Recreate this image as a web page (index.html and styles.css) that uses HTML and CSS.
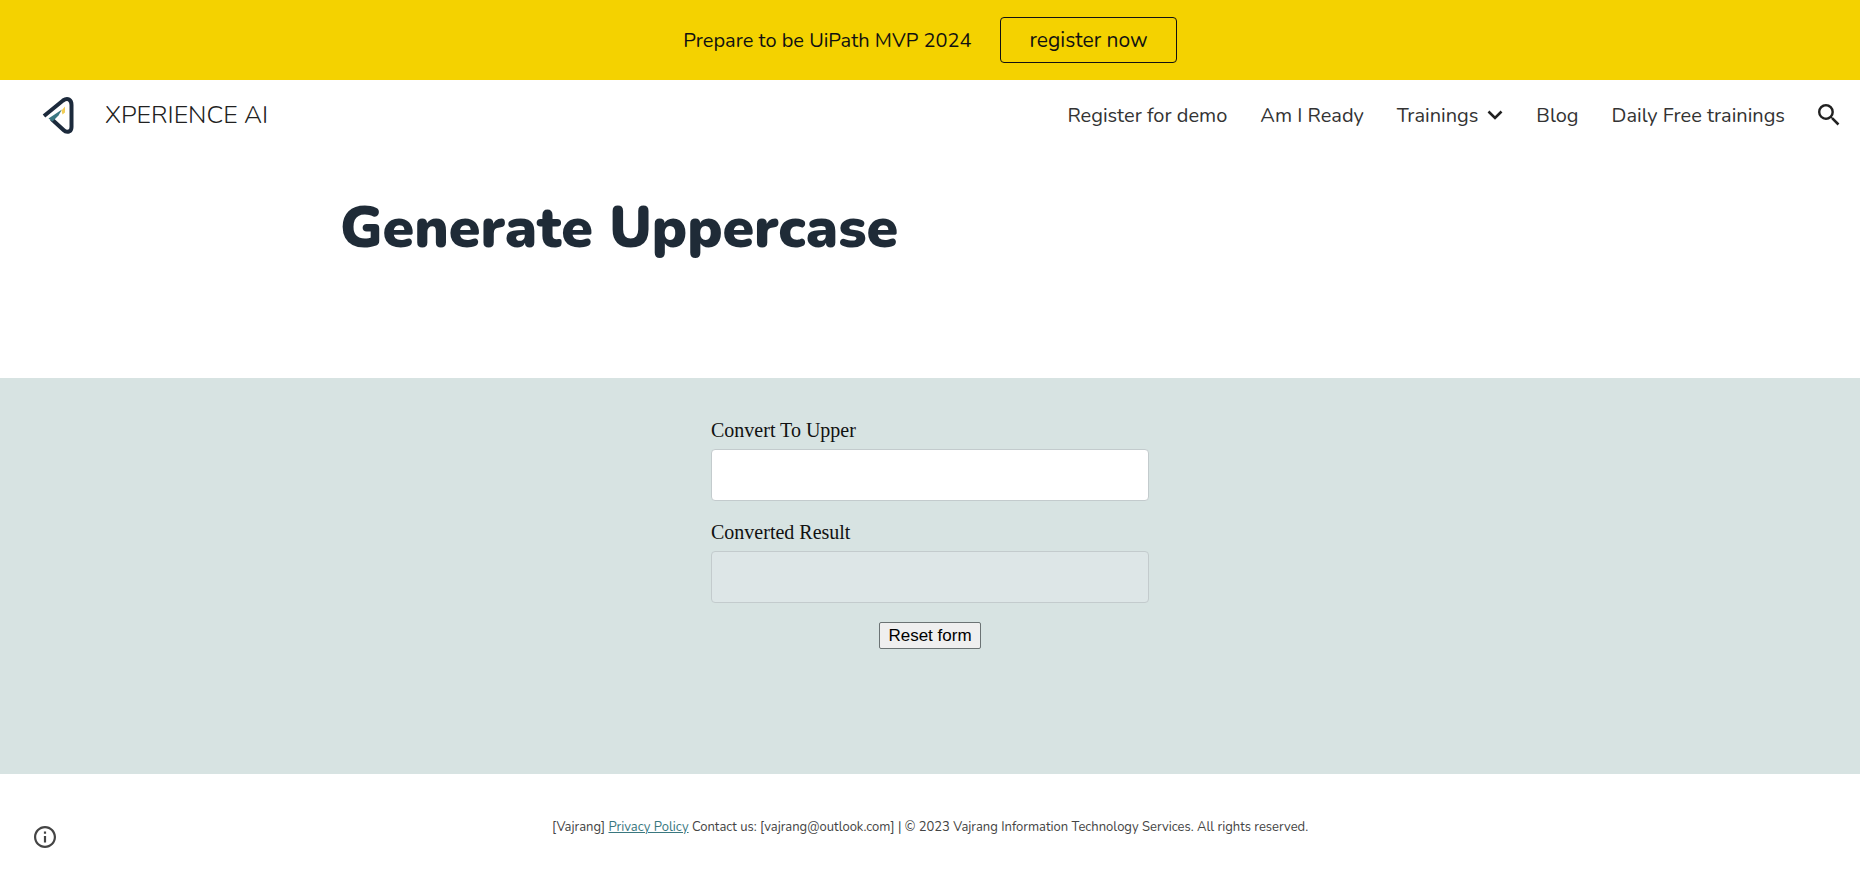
FILE: index.html
```html
<!DOCTYPE html>
<html lang="en">
<head>
<meta charset="utf-8">
<meta name="viewport" content="width=device-width, initial-scale=1">
<title>Generate Uppercase - XPERIENCE AI</title>
<link rel="stylesheet" href="styles.css">
</head>
<body>
<div class="banner">
  <span class="banner-text">Prepare to be UiPath MVP 2024</span>
  <a class="banner-button" href="#">register now</a>
</div>
<header class="header">
  <a class="brand" href="#">
    <svg class="brand-logo" viewBox="0 0 36 40" aria-hidden="true">
      <path d="M4 21 23 5.500Q26.500 3 29 4.500Q31.500 6 31.500 10V32Q31.500 35.500 29 36.500Q26 37.500 23.500 35L11.500 24" fill="none" stroke="#1c2a3c" stroke-width="4"/>
      <path d="M8.500 23.500 22 14.500 18.500 20.500 12.500 26.500Z" fill="#3a7781"/>
      <path d="M21.500 15.500 25 11.500V17.500L22.500 19.500Z" fill="#f1cd55"/>
    </svg>
    <span>XPERIENCE AI</span>
  </a>
  <nav class="nav">
    <a href="#">Register for demo</a>
    <a href="#">Am I Ready</a>
    <a class="nav-menu" href="#">Trainings
      <svg class="chevron" viewBox="0 0 16 10" aria-hidden="true"><path d="M1.500 1.500 8 8 14.500 1.500" fill="none" stroke="#212121" stroke-width="2.600"/></svg>
    </a>
    <a href="#">Blog</a>
    <a href="#">Daily Free trainings</a>
    <button class="icon-button" type="button" aria-label="Search">
      <svg viewBox="3 3 18 18" aria-hidden="true"><path fill="#212121" d="M15.500 14h-.79l-.28-.27A6.471 6.471 0 0 0 16 9.500 6.500 6.500 0 1 0 9.500 16c1.610 0 3.090-.59 4.230-1.570l.27.28v.79l5 4.990L20.490 19l-4.990-5zm-6 0C7.010 14 5 11.990 5 9.500S7.010 5 9.500 5 14 7.010 14 9.500 11.990 14 9.500 14z"/></svg>
    </button>
  </nav>
</header>
<main>
  <section class="hero">
    <h1 class="title">Generate Uppercase</h1>
  </section>
  <section class="form-section">
    <form class="form">
      <label for="source">Convert To Upper</label>
      <input class="field" id="source" type="text">
      <label for="result">Converted Result</label>
      <input class="field" id="result" type="text" disabled>
      <button class="reset" type="reset">Reset form</button>
    </form>
  </section>
</main>
<footer class="footer">
  <button class="icon-button info" type="button" aria-label="Site info">
    <svg viewBox="2 2 20 20" aria-hidden="true"><path fill="#444" d="M11 17h2v-6h-2v6zm1-15C6.480 2 2 6.480 2 12s4.480 10 10 10 10-4.480 10-10S17.520 2 12 2zm0 18c-4.410 0-8-3.590-8-8s3.590-8 8-8 8 3.590 8 8-3.590 8-8 8zM11 9h2V7h-2v2z"/></svg>
  </button>
  <p class="legal">[Vajrang] <a href="#">Privacy Policy</a> Contact us: [vajrang@outlook.com] | © 2023 Vajrang Information Technology Services. All rights reserved.</p>
</footer>
</body>
</html>
```
FILE: styles.css
```css
* { box-sizing: border-box; }
body {
  margin: 0;
  min-height: 100vh;
  background: #fff;
  color: #212121;
  font-family: Nunito, Lato, sans-serif;
  font-size: 20px;
}
a { color: inherit; text-decoration: none; }
.banner {
  display: flex;
  align-items: center;
  justify-content: center;
  gap: 29px;
  min-height: 80px;
  background: #f4d200;
  color: #111;
}
.banner-button {
  padding: 8px 28px;
  border: 1px solid #111;
  border-radius: 4px;
  line-height: 28px;
  font-size: 21px;
}
.header {
  display: flex;
  align-items: center;
  justify-content: space-between;
  height: 70px;
  padding: 0 20px 0 40px;
}
.brand {
  display: flex;
  align-items: center;
  gap: 29px;
  font-size: 25px;
  font-weight: 300;
}
.brand-logo { width: 36px; height: 40px; }
.nav {
  display: flex;
  align-items: center;
  gap: 33px;
  color: #333;
}
.nav-menu { display: flex; align-items: center; gap: 9px; }
.chevron { width: 16px; height: 10px; }
.icon-button {
  display: flex;
  padding: 0;
  border: 0;
  background: none;
}
.icon-button svg { width: 22px; height: 22px; }
.hero {
  min-height: 228px;
  padding: 40px 20px;
}
.title {
  max-width: 1180px;
  margin: 0 auto;
  color: #1f2b37;
  font-size: 57px;
  font-weight: 900;
  line-height: 76px;
}
.form-section {
  min-height: 396px;
  padding: 40px 20px;
  background: #d7e3e2;
}
.form {
  display: flex;
  flex-direction: column;
  max-width: 438px;
  margin: 0 auto;
  color: #111;
  font-family: "Liberation Serif", serif;
  font-size: 20px;
  line-height: 24px;
}
.field {
  height: 52px;
  margin: 7px 0 19px;
  padding: 8px 16px;
  border: 1px solid #c3cbcd;
  border-radius: 4px;
  background: #fff;
  font: inherit;
}
.field:disabled { background: #dde6e7; }
.reset {
  align-self: center;
  height: 27px;
  padding: 0 8px;
  border: 1px solid #6b7374;
  border-radius: 2px;
  background: #efefef;
  color: #000;
  font: 17px "Liberation Sans", sans-serif;
}
.footer {
  display: grid;
  grid-template-columns: 56px 1fr 56px;
  min-height: 105px;
  align-items: center;
  color: #444;
  font-size: 13px;
}
.info { justify-self: end; margin-top: 20px; }
.legal { margin: 0; text-align: center; }
.legal a { color: #39777f; text-decoration: underline; }
```
